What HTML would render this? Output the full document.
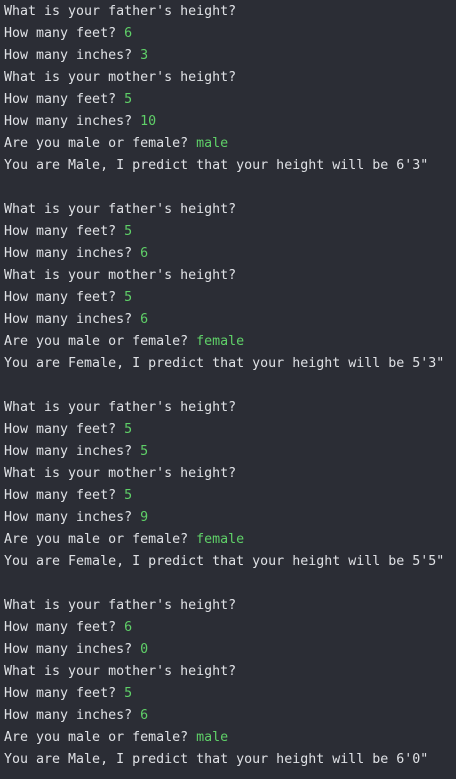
<!DOCTYPE html>
<html><head><meta charset="utf-8"><style>
html,body{margin:0;padding:0;background:#2b2d35;width:456px;height:779px;overflow:hidden}
pre{margin:0;padding:1px 0 0 4px;font-family:"DejaVu Sans Mono","Liberation Mono",monospace;font-size:13.3px;line-height:22px;color:#dfe1e5}
.g{color:#5fd068}
</style></head><body><pre>What is your father's height?
How many feet? <span class="g">6</span>
How many inches? <span class="g">3</span>
What is your mother's height?
How many feet? <span class="g">5</span>
How many inches? <span class="g">10</span>
Are you male or female? <span class="g">male</span>
You are Male, I predict that your height will be 6'3"

What is your father's height?
How many feet? <span class="g">5</span>
How many inches? <span class="g">6</span>
What is your mother's height?
How many feet? <span class="g">5</span>
How many inches? <span class="g">6</span>
Are you male or female? <span class="g">female</span>
You are Female, I predict that your height will be 5'3"

What is your father's height?
How many feet? <span class="g">5</span>
How many inches? <span class="g">5</span>
What is your mother's height?
How many feet? <span class="g">5</span>
How many inches? <span class="g">9</span>
Are you male or female? <span class="g">female</span>
You are Female, I predict that your height will be 5'5"

What is your father's height?
How many feet? <span class="g">6</span>
How many inches? <span class="g">0</span>
What is your mother's height?
How many feet? <span class="g">5</span>
How many inches? <span class="g">6</span>
Are you male or female? <span class="g">male</span>
You are Male, I predict that your height will be 6'0"</pre></body></html>
